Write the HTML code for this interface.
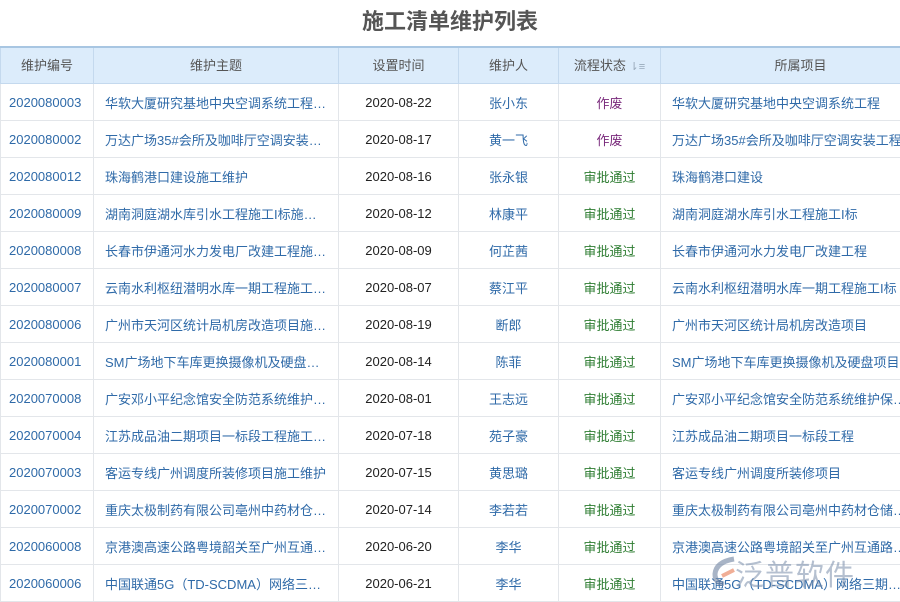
<!DOCTYPE html>
<html><head><meta charset="utf-8"><style>
body{margin:0;width:900px;height:600px;overflow:hidden;background:#fff;font-family:"Liberation Sans","Noto Sans CJK SC",sans-serif;}
h1{margin:0;height:46px;line-height:44px;text-align:center;font-size:22px;color:#555;font-weight:bold;}
table{border-collapse:collapse;table-layout:fixed;width:940px;position:absolute;top:46px;left:0;}
td,th{height:36px;border:1px solid #e3e6ea;font-size:13px;white-space:nowrap;overflow:hidden;padding:0 0 0 8px;text-align:left;}
th{background:#dcecfb;color:#555;font-weight:normal;text-align:center;border-color:#c4d9ee;border-top:2px solid #a8c6e2;height:33px;padding:0 0 2px 0;}
td{color:#2f6aa8;}
td.c{text-align:center;padding:0;}
td.d{color:#222;}
.zf{color:#7a2a7c}.sp{color:#2e7d32}
.wm{position:absolute;left:735px;top:552px;font-size:29px;color:rgba(120,140,170,.55);letter-spacing:1px}
.wmi{position:absolute;left:712px;top:556px;width:26px;height:30px;}
</style></head><body>
<h1>施工清单维护列表</h1>
<table>
<colgroup><col style="width:93px"><col style="width:245px"><col style="width:120px"><col style="width:100px"><col style="width:102px"><col style="width:280px"></colgroup>
<tr><th>维护编号</th><th>维护主题</th><th>设置时间</th><th>维护人</th><th>流程状态 <span style="color:#9ab;font-size:11px">⇂≡</span></th><th>所属项目</th></tr>
<tr><td>2020080003</td><td style="padding-left:11px">华软大厦研究基地中央空调系统工程…</td><td class="c d">2020-08-22</td><td class="c">张小东</td><td class="c zf">作废</td><td style="padding-left:11px">华软大厦研究基地中央空调系统工程</td></tr>
<tr><td>2020080002</td><td style="padding-left:11px">万达广场35#会所及咖啡厅空调安装…</td><td class="c d">2020-08-17</td><td class="c">黄一飞</td><td class="c zf">作废</td><td style="padding-left:11px">万达广场35#会所及咖啡厅空调安装工程</td></tr>
<tr><td>2020080012</td><td style="padding-left:11px">珠海鹤港口建设施工维护</td><td class="c d">2020-08-16</td><td class="c">张永银</td><td class="c sp">审批通过</td><td style="padding-left:11px">珠海鹤港口建设</td></tr>
<tr><td>2020080009</td><td style="padding-left:11px">湖南洞庭湖水库引水工程施工I标施…</td><td class="c d">2020-08-12</td><td class="c">林康平</td><td class="c sp">审批通过</td><td style="padding-left:11px">湖南洞庭湖水库引水工程施工I标</td></tr>
<tr><td>2020080008</td><td style="padding-left:11px">长春市伊通河水力发电厂改建工程施…</td><td class="c d">2020-08-09</td><td class="c">何芷茜</td><td class="c sp">审批通过</td><td style="padding-left:11px">长春市伊通河水力发电厂改建工程</td></tr>
<tr><td>2020080007</td><td style="padding-left:11px">云南水利枢纽潜明水库一期工程施工…</td><td class="c d">2020-08-07</td><td class="c">蔡江平</td><td class="c sp">审批通过</td><td style="padding-left:11px">云南水利枢纽潜明水库一期工程施工I标</td></tr>
<tr><td>2020080006</td><td style="padding-left:11px">广州市天河区统计局机房改造项目施…</td><td class="c d">2020-08-19</td><td class="c">断郎</td><td class="c sp">审批通过</td><td style="padding-left:11px">广州市天河区统计局机房改造项目</td></tr>
<tr><td>2020080001</td><td style="padding-left:11px">SM广场地下车库更换摄像机及硬盘…</td><td class="c d">2020-08-14</td><td class="c">陈菲</td><td class="c sp">审批通过</td><td style="padding-left:11px">SM广场地下车库更换摄像机及硬盘项目</td></tr>
<tr><td>2020070008</td><td style="padding-left:11px">广安邓小平纪念馆安全防范系统维护…</td><td class="c d">2020-08-01</td><td class="c">王志远</td><td class="c sp">审批通过</td><td style="padding-left:11px">广安邓小平纪念馆安全防范系统维护保…</td></tr>
<tr><td>2020070004</td><td style="padding-left:11px">江苏成品油二期项目一标段工程施工…</td><td class="c d">2020-07-18</td><td class="c">苑子豪</td><td class="c sp">审批通过</td><td style="padding-left:11px">江苏成品油二期项目一标段工程</td></tr>
<tr><td>2020070003</td><td style="padding-left:11px">客运专线广州调度所装修项目施工维护</td><td class="c d">2020-07-15</td><td class="c">黄思璐</td><td class="c sp">审批通过</td><td style="padding-left:11px">客运专线广州调度所装修项目</td></tr>
<tr><td>2020070002</td><td style="padding-left:11px">重庆太极制药有限公司亳州中药材仓…</td><td class="c d">2020-07-14</td><td class="c">李若若</td><td class="c sp">审批通过</td><td style="padding-left:11px">重庆太极制药有限公司亳州中药材仓储…</td></tr>
<tr><td>2020060008</td><td style="padding-left:11px">京港澳高速公路粤境韶关至广州互通…</td><td class="c d">2020-06-20</td><td class="c">李华</td><td class="c sp">审批通过</td><td style="padding-left:11px">京港澳高速公路粤境韶关至广州互通路…</td></tr>
<tr><td>2020060006</td><td style="padding-left:11px">中国联通5G（TD-SCDMA）网络三…</td><td class="c d">2020-06-21</td><td class="c">李华</td><td class="c sp">审批通过</td><td style="padding-left:11px">中国联通5G（TD-SCDMA）网络三期…</td></tr>
</table>
<svg class="wmi" viewBox="0 0 26 30"><path d="M22 3 Q4 6 3 18 Q3 27 12 28" stroke="rgba(110,130,160,.6)" stroke-width="5" fill="none"/><path d="M10 20 L22 14" stroke="rgba(230,120,80,.6)" stroke-width="4"/></svg>
<div class="wm">泛普软件</div>
</body></html>
